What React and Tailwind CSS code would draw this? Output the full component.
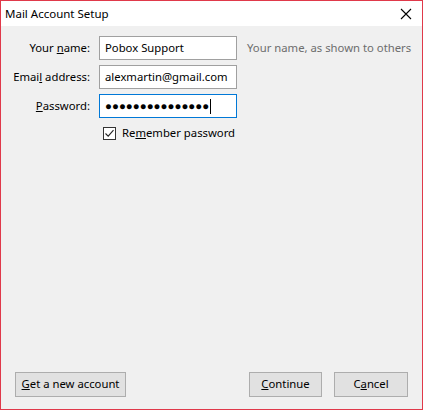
import React from 'react'

const font = { fontFamily: '"Noto Sans", "Open Sans", sans-serif' }

function Field({ label, children, active }) {
  return (
    <>
      <label className="text-right text-[11.3px] leading-[24px] text-black">{label}</label>
      <div
        className={
          'h-[24px] bg-white border flex items-center px-[5px] text-[11.3px] text-black ' +
          (active ? 'border-[#0078d7]' : 'border-[#a0a0a0]')
        }
      >
        {children}
      </div>
    </>
  )
}

function Button({ children, className = '' }) {
  return (
    <button
      className={
        'h-[25px] bg-[#e1e1e1] border border-[#adadad] text-[11.3px] text-black flex items-center justify-center ' +
        className
      }
    >
      {children}
    </button>
  )
}

export default function App() {
  return (
    <div
      className="w-[423px] h-[410px] border border-[#e0394a] bg-[#f0f0f0] flex flex-col select-none"
      style={font}
    >
      {/* title bar */}
      <div className="h-[25px] bg-white flex items-center justify-between pl-[4px] pr-[10px] shrink-0">
        <span className="text-[11.5px] text-black">Mail Account Setup</span>
        <svg width="12" height="12" viewBox="0 0 12 12" className="text-black">
          <path d="M1 1 L11 11 M11 1 L1 11" stroke="currentColor" strokeWidth="1.1" />
        </svg>
      </div>

      {/* form */}
      <div className="pt-[10px] grid grid-cols-[89px_138px_auto] gap-x-[9px] gap-y-[5px] items-center">
        <Field label={<>Your <u>n</u>ame:</>}>Pobox Support</Field>
        <span className="text-[11.3px] text-[#6d6d6d] pl-[1px] whitespace-nowrap">Your name, as shown to others</span>
        <Field label={<>Emai<u>l</u> address:</>}>alexmartin@gmail.com</Field>
        <span />
        <Field label={<><u>P</u>assword:</>} active>
          <span className="text-[11.5px] tracking-[0px]">●●●●●●●●●●●●●●●</span>
          <span className="w-px h-[15px] bg-black ml-[1px]" />
        </Field>
        <span />
        <span />
        <div className="flex items-center gap-[6px] pl-[4px] pt-[2px]">
          <span className="w-[13px] h-[13px] border border-[#333] bg-white flex items-center justify-center">
            <svg width="11" height="11" viewBox="0 0 11 11">
              <path d="M1.5 5.5 L4.2 8.2 L9.5 2.2" fill="none" stroke="#222" strokeWidth="1.1" />
            </svg>
          </span>
          <span className="text-[11.3px] text-black whitespace-nowrap">
            Re<u>m</u>ember password
          </span>
        </div>
        <span />
      </div>

      {/* footer buttons */}
      <div className="mt-auto flex items-center px-[14px] pb-[12px]">
        <Button className="w-[111px]">
          <span><u>G</u>et a new account</span>
        </Button>
        <div className="ml-auto flex gap-[12px]">
          <Button className="w-[73px]">
            <span><u>C</u>ontinue</span>
          </Button>
          <Button className="w-[74px]">
            <span>C<u>a</u>ncel</span>
          </Button>
        </div>
      </div>
    </div>
  )
}
